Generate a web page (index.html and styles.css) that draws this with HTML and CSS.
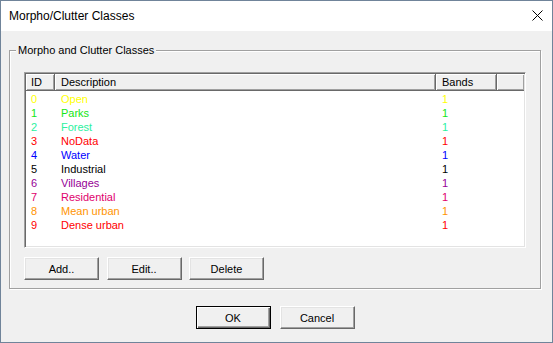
FILE: index.html
```html
<!DOCTYPE html>
<html>
<head>
    <title>Morpho/Clutter Classes</title>
    <link rel="stylesheet" href="styles.css">
</head>
<body>
    <div class="window">
        <div class="titlebar">
            <span class="title">Morpho/Clutter Classes</span>
            <svg class="close" width="11" height="11" viewBox="0 0 11 11">
                <path d="M0.5 0.5 L10.5 10.5 M10.5 0.5 L0.5 10.5" stroke="#000" stroke-width="1" fill="none"/>
            </svg>
        </div>

        <div class="client">
            <div class="group">
                <span class="group-title">Morpho and Clutter Classes</span>

                <div class="listview">
                    <div class="header">
                        <div class="hcell">ID</div>
                        <div class="hcell">Description</div>
                        <div class="hcell">Bands</div>
                        <div class="hcell"></div>
                    </div>
                    <div class="rows">
                        <div class="row c-open"><span>0</span><span>Open</span><span>1</span></div>
                        <div class="row c-parks"><span>1</span><span>Parks</span><span>1</span></div>
                        <div class="row c-forest"><span>2</span><span>Forest</span><span>1</span></div>
                        <div class="row c-nodata"><span>3</span><span>NoData</span><span>1</span></div>
                        <div class="row c-water"><span>4</span><span>Water</span><span>1</span></div>
                        <div class="row c-industrial"><span>5</span><span>Industrial</span><span>1</span></div>
                        <div class="row c-villages"><span>6</span><span>Villages</span><span>1</span></div>
                        <div class="row c-residential"><span>7</span><span>Residential</span><span>1</span></div>
                        <div class="row c-mean"><span>8</span><span>Mean urban</span><span>1</span></div>
                        <div class="row c-dense"><span>9</span><span>Dense urban</span><span>1</span></div>
                    </div>
                </div>

                <div class="list-buttons">
                    <button class="btn">Add..</button>
                    <button class="btn">Edit..</button>
                    <button class="btn">Delete</button>
                </div>
            </div>

            <div class="footer">
                <button class="btn btn-default">OK</button>
                <button class="btn">Cancel</button>
            </div>
        </div>
    </div>
</body>
</html>
```

FILE: styles.css
```css
html, body {
    margin: 0;
    padding: 0;
}

body {
    font-family: "Liberation Sans", Arial, sans-serif;
    font-size: 11px;
    color: #000;
    background-color: #f0f0f0;
}

.window {
    width: 553px;
    height: 343px;
    box-sizing: border-box;
    border: 1px solid #70849a;
    background-color: #f0f0f0;
    display: flex;
    flex-direction: column;
}

/* Title bar */
.titlebar {
    height: 30px;
    background-color: #fff;
    display: flex;
    align-items: center;
    justify-content: space-between;
    padding: 0 9px 0 8px;
}

.title {
    font-size: 12px;
    margin-top: -1px;
}

.close {
    display: block;
    margin-top: -1px;
}

/* Client area */
.client {
    flex: 1;
    padding: 19px 11px 0 8px;
    display: flex;
    flex-direction: column;
}

.group {
    position: relative;
    height: 239px;
    box-sizing: border-box;
    border: 1px solid #a0a0a0;
    box-shadow: 1px 1px 0 #fff, inset 1px 1px 0 #fff;
    padding: 21px 14px 0 14px;
}

.group-title {
    position: absolute;
    left: 6px;
    top: -7px;
    padding: 0 2px;
    line-height: 13px;
    background-color: #f0f0f0;
}

/* List view */
.listview {
    height: 176px;
    box-sizing: border-box;
    border: 1px solid;
    border-color: #a0a0a0 #fff #fff #a0a0a0;
    box-shadow: inset 1px 1px 0 #696969, inset -1px -1px 0 #e3e3e3;
    background-color: #fff;
    padding: 1px;
}

.header {
    display: grid;
    grid-template-columns: 29px 381px 61px 1fr;
    height: 17px;
}

.hcell {
    background-color: #f0f0f0;
    border-right: 1px solid #696969;
    border-bottom: 1px solid #696969;
    box-shadow: inset 1px 1px 0 #fff, inset -1px -1px 0 #a0a0a0;
    padding-left: 6px;
    line-height: 16px;
    overflow: hidden;
}

.hcell:first-child {
    padding-left: 5px;
}

.hcell:last-child {
    border-right: none;
}

.rows {
    padding-top: 1px;
}

.row {
    display: grid;
    grid-template-columns: 29px 381px 61px;
    height: 14px;
    line-height: 14px;
}

.row span {
    padding-left: 6px;
}

.row span:first-child {
    padding-left: 5px;
}

.c-open { color: #ffff00; }
.c-parks { color: #14e614; }
.c-forest { color: #2cf0a0; }
.c-nodata { color: #ff0000; }
.c-water { color: #0000ff; }
.c-industrial { color: #000000; }
.c-villages { color: #960096; }
.c-residential { color: #e0006c; }
.c-mean { color: #ff9400; }
.c-dense { color: #ff0000; }

/* Buttons */
.list-buttons {
    display: flex;
    gap: 7.5px;
    margin-top: 9px;
}

.btn {
    width: 75px;
    height: 23px;
    box-sizing: border-box;
    margin: 0;
    padding: 0;
    font-family: "Liberation Sans", Arial, sans-serif;
    font-size: 11px;
    color: #000;
    background-color: #f0f0f0;
    border: 1px solid;
    border-color: #fff #696969 #696969 #fff;
    box-shadow: inset -1px -1px 0 #a0a0a0, inset 1px 1px 0 #e3e3e3;
    border-radius: 0;
}

.btn-default {
    border-color: #000;
    box-shadow: inset 1px 1px 0 #fff, inset -1px -1px 0 #696969, inset -2px -2px 0 #a0a0a0;
}

.footer {
    display: flex;
    justify-content: center;
    gap: 9px;
    margin-top: 17px;
}
```
